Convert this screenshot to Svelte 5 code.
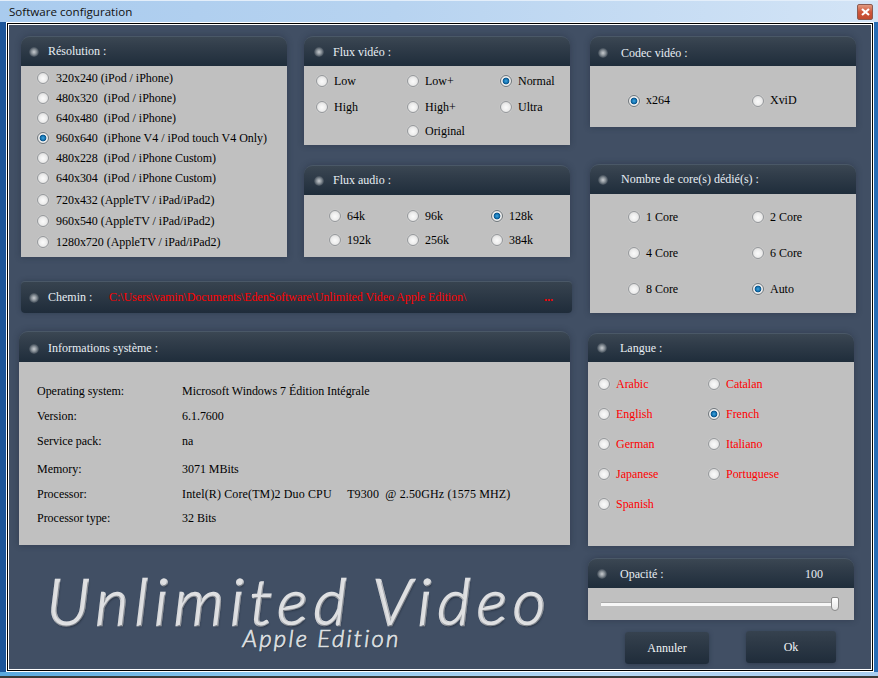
<script>
  const resolutions = [
    ['320x240 (iPod / iPhone)', false, 20], ['480x320  (iPod / iPhone)', false, 20], ['640x480  (iPod / iPhone)', false, 20],
    ['960x640  (iPhone V4 / iPod touch V4 Only)', true, 20], ['480x228  (iPod / iPhone Custom)', false, 20], ['640x304  (iPod / iPhone Custom)', false, 20],
    ['720x432 (AppleTV / iPad/iPad2)', false, 24], ['960x540 (AppleTV / iPad/iPad2)', false, 18], ['1280x720 (AppleTV / iPad/iPad2)', false, 24]
  ];
  const video = [['Low'], ['Low+'], ['Normal', true], ['High'], ['High+'], ['Ultra'], [''], ['Original']];
  const audio = [['64k'], ['96k'], ['128k', true], ['192k'], ['256k'], ['384k']];
  const codec = [['x264', true], ['XviD']];
  const cores = [['1 Core'], ['2 Core'], ['4 Core'], ['6 Core'], ['8 Core'], ['Auto', true]];
  const langs = [['Arabic'], ['Catalan'], ['English'], ['French', true], ['German'], ['Italiano'], ['Japanese'], ['Portuguese'], ['Spanish']];
  const info = [
    ['Operating system:', 'Microsoft Windows 7 Édition Intégrale', 0],
    ['Version:', '6.1.7600', 5],
    ['Service pack:', 'na', 5],
    ['Memory:', '3071 MBits', 8],
    ['Processor:', 'Intel(R) Core(TM)2 Duo CPU     T9300  @ 2.50GHz (1575 MHZ)', 5],
    ['Processor type:', '32 Bits', 4]
  ];
</script>

{#snippet radio(label, on, red)}
  {#if label}
    <label class="opt" class:red>
      <span class="dot" class:on></span>
      <span class="txt">{label}</span>
    </label>
  {:else}
    <span></span>
  {/if}
{/snippet}

{#snippet head(title)}
  <div class="head"><span class="led"></span><span>{title}</span></div>
{/snippet}

<div class="window">
  <div class="title">
    <span>Software configuration</span>
    <button class="close" aria-label="Fermer">
      <svg width="9" height="8" viewBox="0 0 9 8"><path d="M1 1l7 6M8 1L1 7" stroke="#fff" stroke-width="2.2" fill="none"/></svg>
    </button>
  </div>
  <div class="client">
    <div class="left">
      <div class="toprow">
        <section class="panel res">
          {@render head('Résolution :')}
          <div class="body reslist">
            {#each resolutions as r}
              <div class="resrow" style="height:{r[2]}px">{@render radio(r[0], r[1])}</div>
            {/each}
          </div>
        </section>
        <div class="midcol">
          <section class="panel vid">
            {@render head('Flux vidéo :')}
            <div class="body vidgrid">
              {#each video as v}{@render radio(v[0], v[1])}{/each}
            </div>
          </section>
          <section class="panel aud">
            {@render head('Flux audio :')}
            <div class="body audgrid">
              {#each audio as v}{@render radio(v[0], v[1])}{/each}
            </div>
          </section>
        </div>
      </div>

      <div class="chemin">
        <span class="led"></span>
        <span class="chlabel">Chemin :</span>
        <span class="path">C:\Users\vamin\Documents\EdenSoftware\Unlimited Video Apple Edition\</span>
        <span class="more">...</span>
      </div>

      <section class="panel infos">
        {@render head('Informations système :')}
        <div class="body infolist">
          {#each info as i}
            <div class="inforow" style="margin-top:{i[2]}px"><span class="k">{i[0]}</span><span class="v" class:wide={i[0] === 'Processor:'}>{i[1]}</span></div>
          {/each}
        </div>
      </section>

      <div class="logo">
        <div class="logo1">Unlimited Video</div>
        <div class="logo2">Apple Edition</div>
      </div>
    </div>

    <div class="right">
      <section class="panel codec">
        {@render head('Codec vidéo :')}
        <div class="body codecgrid">
          {#each codec as v}{@render radio(v[0], v[1])}{/each}
        </div>
      </section>
      <section class="panel cores">
        {@render head('Nombre de core(s) dédié(s) :')}
        <div class="body coregrid">
          {#each cores as v}{@render radio(v[0], v[1])}{/each}
        </div>
      </section>
      <section class="panel langs">
        {@render head('Langue :')}
        <div class="body langgrid">
          {#each langs as v}{@render radio(v[0], v[1], true)}{/each}
        </div>
      </section>
      <section class="panel opac">
        <div class="head"><span class="led"></span><span>Opacité :</span><span class="val">100</span></div>
        <div class="body slider">
          <div class="track"><span class="thumb"></span></div>
        </div>
      </section>
      <div class="btns">
        <button class="btn annuler">Annuler</button>
        <button class="btn ok">Ok</button>
      </div>
    </div>
  </div>
</div>

<style>
  :global(body) { margin: 0; }
  .window {
    width: 878px; height: 678px; box-sizing: border-box; overflow: hidden;
    font: 12px "Liberation Serif", "Times New Roman", serif; color: #000;
    background: linear-gradient(90deg, #1d5599 0, #2a6db4 100%);
    display: flex; flex-direction: column; position: relative;
  }
  .window::after {
    content: ""; position: absolute; left: 0; right: 0; bottom: 0; height: 2px; background: #3a3a38;
  }
  .title {
    height: 22px; flex: none; box-sizing: border-box; padding: 0 5px 0 9px;
    display: flex; align-items: center; justify-content: space-between;
    background: linear-gradient(90deg, #a9cbee 0, #b7d3f0 45%, #d3e4f6 100%);
    font: 11.6px "Open Sans", Arial, sans-serif; color: #111;
    border-top: 1px solid #e3eefa;
  }
  .close {
    width: 16px; height: 16px; padding: 0; margin-top: 1px; border: 1px solid #8c5a50; border-radius: 2px;
    background: linear-gradient(#e09a80, #d0563a 50%, #c04a2f);
    display: flex; align-items: center; justify-content: center;
  }
  .client {
    margin: 3px 7px 0 9px; width: 862px; height: 644px; flex: none; box-sizing: border-box;
    padding: 11px 0 0 12px; display: flex;
    background: #414f64;
    box-shadow: 0 0 0 1px #fff, 0 0 0 2px #000, 0 0 0 3px #fff;
    position: relative;
  }
  .client::before {
    content: ""; position: absolute; left: -9px; right: -7px; bottom: -7px; height: 4px;
    background: linear-gradient(90deg, #5aa9de 0, #8cc8ee 30%, #b6d6f2 70%, #a8cdf0 100%);
  }
  .left { width: 551px; flex: none; display: flex; flex-direction: column; }
  .right { width: 266px; flex: none; margin-left: 18px; display: flex; flex-direction: column; }
  .toprow { display: flex; gap: 17px; height: 221px; }
  .midcol { display: flex; flex-direction: column; gap: 20px; }

  .panel {
    width: 266px; flex: none; display: flex; flex-direction: column;
    border-radius: 9px 9px 0 0; box-shadow: 0 0 6px rgba(30, 40, 55, .45);
  }
  .head {
    height: 30px; flex: none; box-sizing: border-box; display: flex; align-items: center;
    padding-left: 8px; color: #e8eef4;
    background: linear-gradient(#3b4753 0, #323e4b 30%, #1f2d3b 100%);
    border-radius: 9px 9px 0 0; border-top: 1px solid #4a5867;
  }
  .led {
    width: 10px; height: 10px; margin-right: 13px; flex: none; border-radius: 50%;
    background: radial-gradient(circle, #c8ccd0 0, #8a9299 35%, rgba(90, 100, 110, .35) 70%, transparent 100%);
  }
  .res .led { margin-right: 9px; }
  .vid .head, .aud .head { padding-left: 10px; }
  .vid .led, .aud .led { margin-right: 9px; }
  .vid .head { padding-top: 1px; }
  .codec .head { padding-top: 3px; }
  .opac .head { padding-top: 1px; }
  .langs .head { height: 29px; }
  .langs .led, .opac .led { margin-right: 13px; margin-left: 1px; }
  .infos .head { height: 31px; padding-top: 3px; padding-left: 10px; }
  .infos .led { margin-right: 9px; }
  .body { flex: 1; background: #c0c0c0; box-sizing: border-box; letter-spacing: -.03px; }

  .opt { display: flex; align-items: center; gap: 6px; white-space: pre; min-width: 0; }
  .red { color: #f00; }
  .dot {
    width: 12px; height: 12px; flex: none; border-radius: 50%; box-sizing: border-box;
    border: 1px solid #96999c;
    background: radial-gradient(circle at 50% 55%, #fbfbfb 0, #eeeeee 45%, #cfcfcf 100%);
    box-shadow: 0 0 1px rgba(255, 255, 255, .7);
  }
  .dot.on {
    border-color: #70777c;
    background: radial-gradient(circle at 50% 50%, #3fa6e0 0, #0f6aa8 34%, #0d4f80 44%, #f0f0f0 52%, #dcdcdc 100%);
  }

  .res { height: 221px; }
  .reslist { padding: 2px 0 0 16px; }
  .reslist .opt { gap: 7px; }
  .resrow { display: flex; align-items: center; }

  .vid { height: 109px; }
  .vidgrid {
    display: grid; grid-template-columns: 91px 93px auto; grid-template-rows: 26px 26px 22px;
    padding: 2px 0 0 12px; align-items: center;
  }
  .aud { height: 92px; }
  .audgrid {
    display: grid; grid-template-columns: 78px 84px auto; grid-template-rows: 24px 24px;
    padding: 9px 0 0 25px; align-items: center;
  }

  .chemin {
    margin-top: 24px; height: 32px; box-sizing: border-box; display: flex; align-items: center;
    padding-left: 8px; border-radius: 4px; color: #e8eef4;
    background: linear-gradient(#37434f 0, #2f3b48 35%, #1f2c3a 100%);
    border-top: 1px solid #4a5867; box-shadow: 0 0 5px rgba(30, 40, 55, .45);
  }
  .chemin .led { margin-right: 9px; }
  .chlabel { width: 61px; }
  .path { color: #f00; flex: 1; white-space: nowrap; letter-spacing: -.06px; }
  .more { color: #f00; margin-right: 19px; font-weight: bold; }

  .infos { width: 551px; height: 214px; margin: 18px 0 0 -2px; }
  .infolist { padding: 19px 0 0 18px; }
  .inforow { display: flex; align-items: center; white-space: pre; height: 20px; }
  .k { width: 145px; flex: none; }
  .wide { letter-spacing: .13px; }

  .logo { flex: 1; position: relative; display: flex; flex-direction: column; align-items: center; color: #dfe0e2; }
  .logo1 {
    margin: 29px 0 0 6px; font: italic 300 64px/54px Lato, sans-serif; letter-spacing: 6.2px; white-space: nowrap;
    -webkit-text-stroke: 2.4px #dfe0e2; paint-order: stroke; stroke-linejoin: round;
    text-shadow: 1px 2px 2px rgba(20, 28, 40, .55);
  }
  .logo2 {
    margin: 0 0 0 50px; font: italic 300 24px/20px Lato, sans-serif; letter-spacing: 2.2px; white-space: nowrap;
    -webkit-text-stroke: .7px #dfe0e2; text-shadow: 1px 1px 1px rgba(20, 28, 40, .5);
  }

  .codec { height: 91px; }
  .codecgrid { display: grid; grid-template-columns: 124px auto; padding: 27px 0 0 38px; align-items: start; }
  .cores { height: 149px; margin-top: 37px; }
  .coregrid {
    display: grid; grid-template-columns: 124px auto; grid-template-rows: 36px 36px 36px;
    padding: 5px 0 0 38px; align-items: center;
  }
  .langs { height: 213px; margin: 20px 0 0 -2px; }
  .langgrid {
    display: grid; grid-template-columns: 110px auto; grid-auto-rows: 30px;
    padding: 7px 0 0 10px; align-items: center;
  }
  .opac { height: 62px; margin: 12px 0 0 -2px; }
  .opac .head { position: relative; }
  .val { position: absolute; left: 217px; }
  .slider { padding: 14px 18px 0 13px; }
  .track {
    height: 3px; background: #f6f6f6; border-top: 1px solid #a9a9a9; position: relative; margin-right: 1px;
  }
  .thumb {
    position: absolute; right: -4px; top: -6px; width: 8px; height: 14px; box-sizing: border-box;
    border: 1px solid #8a8a8a; border-radius: 2px 2px 4px 4px; background: linear-gradient(#fff, #e6e6e6);
  }
  .btns { display: flex; margin: 11px 0 0 0; align-items: flex-start; }
  .btn {
    font: 12px "Liberation Serif", serif; color: #f2f4f6; border: 0; padding: 0; border-radius: 3px;
    background: linear-gradient(#36424f 0, #2f3b48 30%, #1f2c3a 100%);
    box-shadow: 0 1px 4px rgba(30, 40, 55, .5);
  }
  .annuler { width: 84px; height: 32px; margin: 1px 0 0 35px; }
  .ok { width: 90px; height: 32px; margin-left: 37px; }
</style>
